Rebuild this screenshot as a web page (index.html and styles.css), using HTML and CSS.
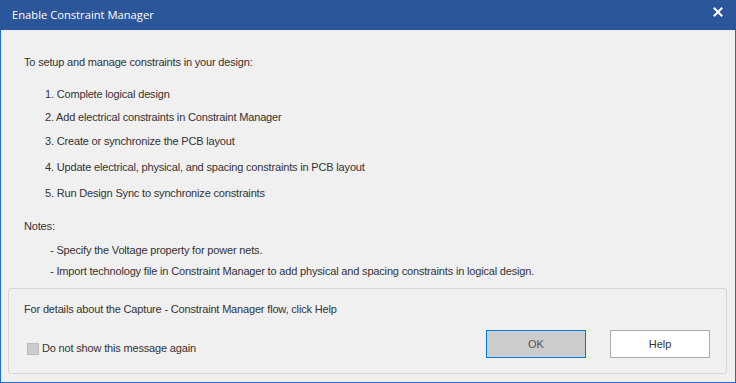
FILE: index.html
```html
<!DOCTYPE html>
<html>
<head>
<meta charset="utf-8">
<link rel="stylesheet" href="styles.css">
</head>
<body>
<div class="window">
  <div class="titlebar">
    <span class="title">Enable Constraint Manager</span>
    <svg class="close" width="10" height="10" viewBox="0 0 10 10"><path d="M1.5 1.5 L8.5 8.5 M8.5 1.5 L1.5 8.5" stroke="#fff" stroke-width="2" stroke-linecap="square"/></svg>
  </div>
  <div class="content">
    <p class="line intro">To setup and manage constraints in your design:</p>
    <p class="line step s1">1. Complete logical design</p>
    <p class="line step s2">2. Add electrical constraints in Constraint Manager</p>
    <p class="line step s3">3. Create or synchronize the PCB layout</p>
    <p class="line step s4">4. Update electrical, physical, and spacing constraints in PCB layout</p>
    <p class="line step s5">5. Run Design Sync to synchronize constraints</p>
    <p class="line notes">Notes:</p>
    <p class="line note n1">- Specify the Voltage property for power nets.</p>
    <p class="line note n2">- Import technology file in Constraint Manager to add physical and spacing constraints in logical design.</p>
  </div>
  <div class="panel">
    <p class="line">For details about the Capture - Constraint Manager flow, click  Help</p>
    <div class="actions">
      <label class="check"><span class="box"></span>Do not show this message again</label>
      <div class="buttons">
        <button class="btn primary">OK</button>
        <button class="btn">Help</button>
      </div>
    </div>
  </div>
</div>
</body>
</html>
```
FILE: styles.css
```css
html, body {
  margin: 0;
  padding: 0;
  background: #f0f0f0;
}
.window {
  width: 736px;
  height: 383px;
  box-sizing: border-box;
  border: 1px solid #1b6fd3;
  border-top: none;
  background: #f0f0f0;
  display: flex;
  flex-direction: column;
  font-family: "Liberation Sans", Arial, sans-serif;
  font-size: 11px;
  letter-spacing: -0.17px;
  color: #333;
}
.titlebar {
  height: 30px;
  margin: 0 -1px;
  background: #2b579a;
  display: flex;
  align-items: center;
  justify-content: space-between;
  padding: 0 13px 0 12px;
  flex: none;
}
.title {
  color: #fff;
  font-family: "Open Sans", "Noto Sans", sans-serif;
  font-size: 11.2px;
  letter-spacing: 0;
  margin-top: -1px;
}
.close {
  margin-top: -6px;
}
.content {
  padding: 24px 0 0 23px;
  flex: 1;
}
.line {
  margin: 0;
  line-height: 16px;
  white-space: nowrap;
}
.step { padding-left: 21px; }
.s1 { margin-top: 16px; }
.s2 { margin-top: 7px; }
.s3 { margin-top: 8px; }
.s4 { margin-top: 10px; }
.s5 { margin-top: 10px; }
.notes { margin-top: 17px; }
.note { padding-left: 26px; }
.n1 { margin-top: 8px; }
.n2 { margin-top: 5px; }
.panel {
  margin: 0 8px 8px 7px;
  height: 86px;
  box-sizing: border-box;
  border: 1px solid #d6d6d6;
  border-radius: 3px;
  padding: 12px 16px 0 15px;
  display: flex;
  flex-direction: column;
  flex: none;
}
.actions {
  margin-top: 13px;
  margin-left: 3px;
  display: flex;
  justify-content: space-between;
  align-items: flex-end;
}
.check {
  display: flex;
  align-items: center;
  gap: 3px;
  margin-bottom: 3px;
  line-height: 13px;
}
.box {
  width: 10px;
  height: 10px;
  background: #cccccc;
  border: 1px solid #bcbcbc;
}
.buttons {
  display: flex;
  gap: 24px;
}
.btn {
  width: 100px;
  height: 28px;
  box-sizing: border-box;
  background: #fff;
  border: 1px solid #adadad;
  font-family: "Liberation Sans", Arial, sans-serif;
  font-size: 11px;
  color: #333;
  padding: 0;
  margin: 0;
}
.btn.primary {
  background: #cccccc;
  border-color: #0078d7;
  color: #555;
}
```
